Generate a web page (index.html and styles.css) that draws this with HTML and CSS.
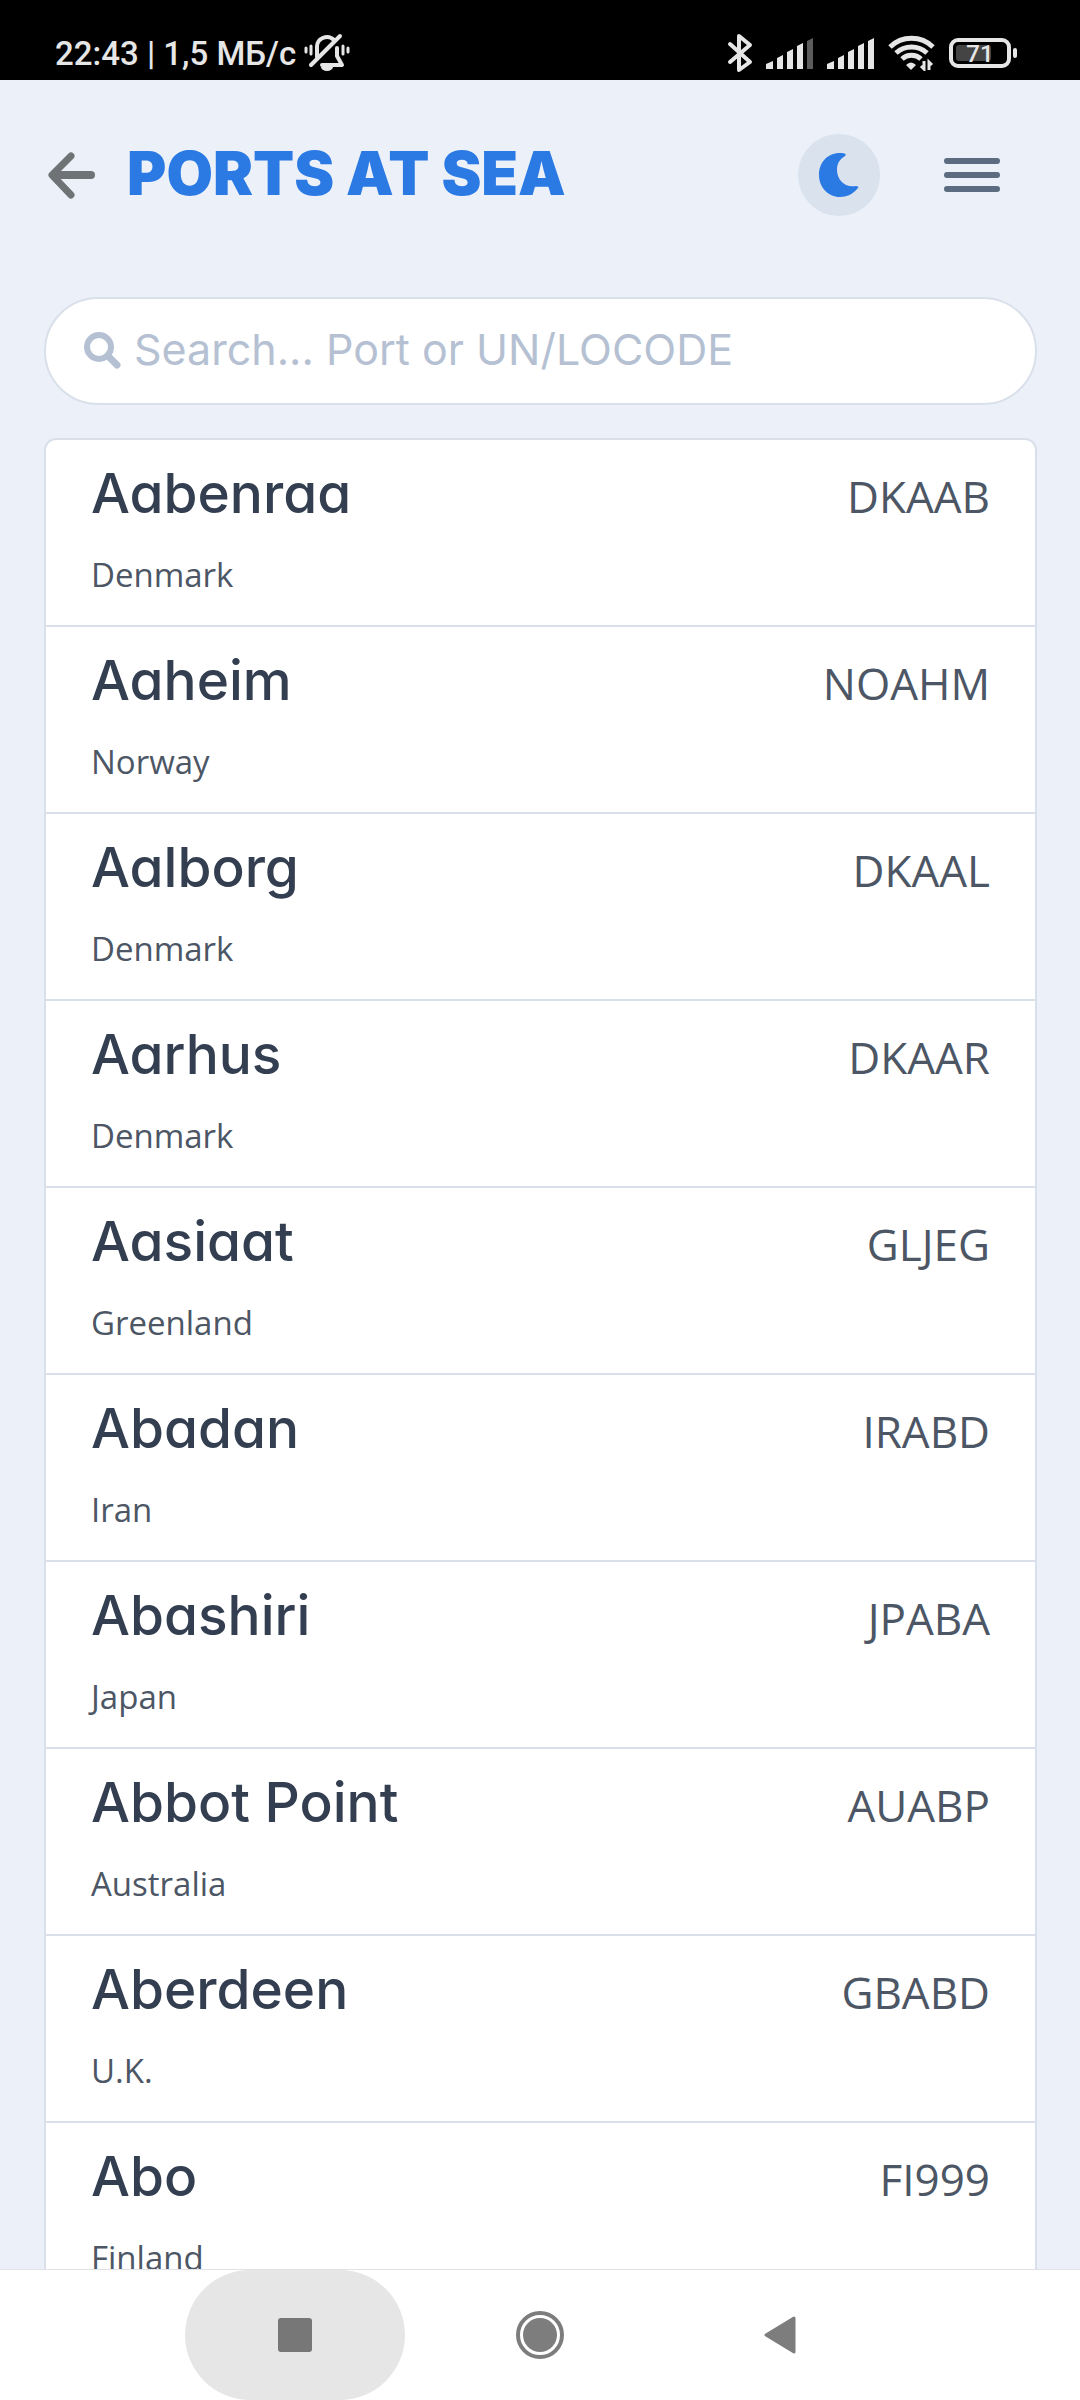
FILE: index.html
```
<!DOCTYPE html>
<html lang="en">
<head>
    <meta charset="UTF-8">
    <meta name="viewport" content="width=device-width, initial-scale=1">
    <title>Ports at Sea</title>
    <link rel="stylesheet" href="styles.css">
</head>

<body>
    <!-- Status bar -->
    <div class="status-bar">
        <div class="status-left">
            <span>22:43 | 1,5 МБ/с</span>
            <svg width="46" height="40" viewBox="0 0 46 40" fill="none" stroke="#e6e6e6" stroke-width="4" stroke-linecap="round">
                <path d="M13 24V15a10 10 0 0 1 17-8"/>
                <path d="M7 32L36 3"/>
                <path d="M33 15v8l5 9H18" stroke-linejoin="round"/>
                <path d="M17 34h12a6 4 0 0 1-12 0z" fill="#e6e6e6" stroke="none"/>
                <path d="M2 15v4M7 13v8M39 13v8M44 15v4" stroke-width="3"/>
            </svg>
        </div>
        <div class="status-right">
            <svg width="26" height="40" viewBox="0 0 26 40" fill="none" stroke="#e6e6e6" stroke-width="4" stroke-linecap="round" stroke-linejoin="round">
                <path d="M3 11L23 29L12 37V3L23 12L3 29"/>
            </svg>
            <svg width="48" height="32" viewBox="0 0 48 32" fill="#e6e6e6">
                <path d="M0 27l7-3v8H0zM11 21l6-3v14h-6zM21 15l6-3v20h-6zM31 9l6-3v26h-6z"/>
                <path d="M41 4l6-3v31h-6z" fill="#5c5c5c"/>
            </svg>
            <svg width="48" height="32" viewBox="0 0 48 32" fill="#e6e6e6">
                <path d="M0 27l7-3v8H0zM11 21l6-3v14h-6zM21 15l6-3v20h-6zM31 9l6-3v26h-6zM41 4l6-3v31h-6z"/>
            </svg>
            <svg class="wifi" width="48" height="36" viewBox="0 0 48 36" fill="none" stroke="#e6e6e6" stroke-width="5">
                <path d="M2 12a31 31 0 0 1 43 0"/>
                <path d="M8 18a23 23 0 0 1 31 0"/>
                <path d="M14 24a14 14 0 0 1 19 0"/>
                <path d="M18 30q5-5 10 0l-5 5z" fill="#e6e6e6" stroke="none"/>
                <path d="M36 26v8l-3-3M41 35v-8l3 3" stroke-width="3"/>
            </svg>
            <svg width="68" height="32" viewBox="0 0 68 32">
                <rect x="2" y="3" width="58" height="26" rx="7" fill="none" stroke="#e6e6e6" stroke-width="4"/>
                <rect x="7" y="8" width="35" height="16" rx="3" fill="#444"/>
                <rect x="64" y="11" width="4" height="10" rx="2" fill="#e6e6e6"/>
                <text x="31" y="25" class="battery-text">71</text>
            </svg>
        </div>
    </div>

    <!-- Header -->
    <header class="header">
        <button class="icon-button" aria-label="Back">
            <svg width="48" height="48" viewBox="0 0 48 48" fill="none" stroke="#6f7375" stroke-width="8" stroke-linecap="round" stroke-linejoin="round">
                <path d="M24 5L5 24l19 20M5 24" stroke-width="7"/>
                <path d="M8 24h36"/>
            </svg>
        </button>
        <h1>PORTS AT SEA</h1>
        <button class="icon-button theme-button" aria-label="Dark mode">
            <svg width="42" height="46" viewBox="0 0 42 46" fill="#2b7ae4">
                <path d="M22 1C9 1 1 11 1 23s9 22 21 22c8 0 14-4 18-9 1-1 0-2-2-2C26 36 19 27 19 18c0-7 3-11 8-14 2-2 0-3-5-3z"/>
            </svg>
        </button>
        <button class="icon-button" aria-label="Menu">
            <svg width="56" height="34" viewBox="0 0 56 34" fill="#5b6b80">
                <rect x="0" y="0" width="56" height="6" rx="3"/>
                <rect x="0" y="14" width="56" height="6" rx="3"/>
                <rect x="0" y="28" width="56" height="6" rx="3"/>
            </svg>
        </button>
    </header>

    <main class="content">
        <label class="search">
            <svg width="38" height="38" viewBox="0 0 38 38" fill="none" stroke="#b5c1d2">
                <circle cx="15" cy="15" r="12" stroke-width="6"/>
                <path d="M24 24l9 9" stroke-width="7" stroke-linecap="round"/>
            </svg>
            <input type="text" placeholder="Search... Port or UN/LOCODE" aria-label="Search">
        </label>

        <ul class="port-list">
            <li><a href="#"><span class="name">Aabenraa</span><span class="code">DKAAB</span><span class="country">Denmark</span></a></li>
            <li><a href="#"><span class="name">Aaheim</span><span class="code">NOAHM</span><span class="country">Norway</span></a></li>
            <li><a href="#"><span class="name">Aalborg</span><span class="code">DKAAL</span><span class="country">Denmark</span></a></li>
            <li><a href="#"><span class="name">Aarhus</span><span class="code">DKAAR</span><span class="country">Denmark</span></a></li>
            <li><a href="#"><span class="name">Aasiaat</span><span class="code">GLJEG</span><span class="country">Greenland</span></a></li>
            <li><a href="#"><span class="name">Abadan</span><span class="code">IRABD</span><span class="country">Iran</span></a></li>
            <li><a href="#"><span class="name">Abashiri</span><span class="code">JPABA</span><span class="country">Japan</span></a></li>
            <li><a href="#"><span class="name">Abbot Point</span><span class="code">AUABP</span><span class="country">Australia</span></a></li>
            <li><a href="#"><span class="name">Aberdeen</span><span class="code">GBABD</span><span class="country">U.K.</span></a></li>
            <li><a href="#"><span class="name">Abo</span><span class="code">FI999</span><span class="country">Finland</span></a></li>
        </ul>
    </main>

    <!-- System navigation -->
    <nav class="nav-bar">
        <button class="nav-button active" aria-label="Recent apps">
            <svg width="34" height="34" viewBox="0 0 34 34"><rect width="34" height="34" rx="3" fill="#777"/></svg>
        </button>
        <button class="nav-button" aria-label="Home">
            <svg width="50" height="50" viewBox="0 0 50 50">
                <circle cx="25" cy="25" r="22" fill="none" stroke="#7d7d7d" stroke-width="4"/>
                <circle cx="25" cy="25" r="17" fill="#7d7d7d"/>
            </svg>
        </button>
        <button class="nav-button" aria-label="Back">
            <svg width="32" height="38" viewBox="0 0 32 38">
                <path d="M2 19L30 2v34z" fill="#7d7d7d" stroke="#7d7d7d" stroke-width="3" stroke-linejoin="round"/>
            </svg>
        </button>
    </nav>
</body>
</html>
```
FILE: styles.css
```
* {
    box-sizing: border-box;
}
body {
    margin: 0;
    height: 100vh;
    display: flex;
    flex-direction: column;
    overflow: hidden;
    font-family: "Open Sans", sans-serif;
    background-color: #ebf0f9;
}
svg {
    display: block;
    flex-shrink: 0;
}
button {
    border: none;
    padding: 0;
    background: transparent;
    cursor: pointer;
}
/* Status bar */
.status-bar {
    display: flex;
    justify-content: space-between;
    align-items: center;
    flex-shrink: 0;
    height: 80px;
    padding: 26px 63px 0 55px;
    background-color: #000;
    color: #e6e6e6;
    font-family: Roboto, sans-serif;
    font-size: 33px;
    font-weight: 500;
}
.status-left {
    display: flex;
    align-items: center;
    gap: 8px;
}
.status-right {
    display: flex;
    align-items: center;
    gap: 13px;
}
.battery-text {
    font-size: 24px;
    fill: #e6e6e6;
    text-anchor: middle;
}
/* Header */
.header {
    display: flex;
    align-items: center;
    flex-shrink: 0;
    height: 190px;
    padding: 0 80px 0 47px;
    margin-bottom: 27px;
}
.header h1 {
    flex: 1;
    margin: 0 0 4px 32px;
    font-family: Inter, sans-serif;
    font-size: 60px;
    font-weight: 900;
    line-height: 72px;
    color: #2b7ae4;
}
.theme-button {
    display: flex;
    align-items: center;
    justify-content: center;
    width: 82px;
    height: 82px;
    margin-right: 64px;
    border-radius: 50%;
    background-color: #d9e2ed;
}
/* Search and list */
.content {
    flex: 1;
    min-height: 0;
    padding: 0 43px 0 44px;
    overflow: hidden;
}
.search {
    display: flex;
    align-items: center;
    gap: 12px;
    height: 108px;
    padding: 0 38px;
    margin-bottom: 33px;
    border: 2px solid #d9e0e9;
    border-radius: 54px;
    background-color: #fff;
}
.search input {
    flex: 1;
    min-width: 0;
    padding: 0 0 4px;
    border: none;
    outline: none;
    background: transparent;
    font-family: Inter, sans-serif;
    font-size: 43px;
    color: #33415a;
}
.search input::placeholder {
    color: #b5c1d2;
    opacity: 1;
}
.port-list {
    margin: 0;
    padding: 0;
    list-style: none;
    border: 2px solid #d9e0e9;
    border-radius: 12px;
    background-color: #fff;
}
.port-list li {
    border-bottom: 2px solid #d9e0e9;
}
.port-list a {
    display: grid;
    grid-template-columns: 1fr auto;
    grid-template-rows: 106px 79px;
    padding: 0 45px;
    color: #4c5665;
    text-decoration: none;
}
.name {
    font-family: Inter, sans-serif;
    font-feature-settings: "cv11";
    font-size: 55px;
    font-weight: 500;
    line-height: 106px;
    color: #333f50;
}
.code {
    font-size: 44px;
    line-height: 112px;
}
.country {
    font-size: 33px;
    line-height: 58px;
}
/* System navigation */
.nav-bar {
    display: flex;
    justify-content: center;
    gap: 20px;
    flex-shrink: 0;
    height: 131px;
    padding-right: 5px;
    border-top: 1px solid #e0e2e6;
    background-color: #fff;
}
.nav-button {
    display: flex;
    align-items: center;
    justify-content: center;
    width: 220px;
    height: 130px;
    border-radius: 65px;
}
.nav-button.active {
    margin-right: 5px;
    background-color: #e6e6e6;
}
```
